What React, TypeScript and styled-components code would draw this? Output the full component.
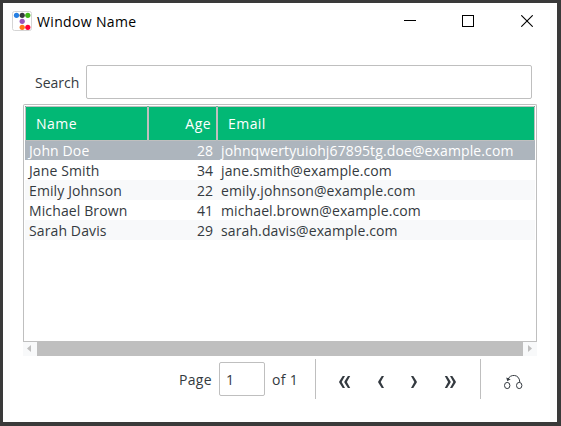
import React from 'react';
import styled, { createGlobalStyle } from 'styled-components';

const GlobalStyle = createGlobalStyle`
  * { box-sizing: border-box; }
  body { margin: 0; background: #3a3a3a; }
`;

const Frame = styled.div`
  width: 561px;
  height: 426px;
  padding: 3px 4px 4px 3px;
  background: #3a3a3a;
  font-family: 'Open Sans', 'Noto Sans', sans-serif;
  font-size: 14px;
  line-height: 20px;
  color: #343a40;
  overflow: hidden;
  white-space: nowrap;
`;

const Window = styled.main`
  height: 419px;
  background: #fff;
  display: flex;
  flex-direction: column;
`;

const TitleBar = styled.header`
  height: 62px;
  padding: 8px 24px 0 9px;
  display: flex;
  align-items: flex-start;
`;

const Title = styled.h1`
  margin: 0 auto 0 5px;
  font-size: 14px;
  font-weight: 400;
  line-height: 21px;
  letter-spacing: 0.35px;
  color: #000;
`;

const WindowButtons = styled.div`
  display: flex;
  gap: 46px;
  padding-top: 4px;
  svg { display: block; }
  svg:last-child { margin-left: 1px; }
`;

const Label = styled.span`
  flex: none;
`;

const SearchRow = styled.label`
  height: 34px;
  padding: 0 25px 0 32px;
  display: flex;
  align-items: center;
  ${Label} { width: 51px; padding-top: 1px; }
`;

const Field = styled.input`
  flex: none;
  width: 446px;
  height: 34px;
  padding: 0 6px;
  border: 1px solid #bfbfbf;
  border-radius: 2px;
  background: #fff;
  color: #343a40;
  font: inherit;
  outline: none;
`;

const PageField = styled(Field)`
  width: 46px;
`;

const TableBox = styled.section`
  width: 514px;
  height: 237px;
  margin: 5px 0 0 20px;
  padding: 1px 1px 0;
  border: 1px solid #bfbfbf;
  border-bottom: 0;
  border-radius: 2px 2px 0 0;
`;

const columns = '123px 69px 318px';

const HeaderRow = styled.div`
  display: grid;
  grid-template-columns: ${columns};
  height: 34px;
  background: #02b875;
`;

const HeaderCell = styled.div<{ $right?: boolean }>`
  border: 1px solid #bfbfbf;
  border-radius: 1px;
  padding: 1px ${p => (p.$right ? 5 : 10)}px 0;
  line-height: 32px;
  letter-spacing: 0.45px;
  color: #fff;
  text-align: ${p => (p.$right ? 'right' : 'left')};
`;

const Row = styled.div<{ $selected: boolean; $striped: boolean }>`
  display: grid;
  grid-template-columns: ${columns};
  height: 20px;
  color: ${p => (p.$selected ? '#fff' : '#343a40')};
  background: ${p => (p.$selected ? '#adb5bd' : p.$striped ? '#f8f9fa' : '#fff')};
`;

const Cell = styled.div<{ $right?: boolean }>`
  padding: 1px 4px 0;
  text-align: ${p => (p.$right ? 'right' : 'left')};
  letter-spacing: ${p => (p.$right ? 0 : 0.115)}px;
`;

const Scrollbar = styled.div`
  width: 514px;
  height: 15px;
  margin-left: 20px;
  display: grid;
  grid-template-columns: 14px 486px 14px;
  background: #bfbfbf;
`;

const ScrollArrow = styled.div`
  margin-top: 1px;
  background: #f8f9fa;
  svg { display: block; }
`;

const Footer = styled.footer`
  height: 40px;
  margin-top: 3px;
  padding-left: 176px;
  display: flex;
  align-items: center;
`;

const PageLabel = styled(Label)`
  width: 40px;
  padding-top: 1px;
  letter-spacing: 0.3px;
`;

const Total = styled(Label)`
  width: 43px;
  margin-left: 7px;
  padding-top: 1px;
  letter-spacing: 0.3px;
`;

const Divider = styled.div`
  flex: none;
  width: 1px;
  height: 40px;
  background: #bfbfbf;
`;

const Nav = styled.nav`
  flex: none;
  padding: 5px 0 0 22px;
  display: flex;
`;

const PageNav = styled(Nav)`
  width: 164px;
`;

const IconButton = styled.button<{ $width: number }>`
  width: ${p => p.$width}px;
  height: 16px;
  padding: 0;
  border: 0;
  background: none;
  color: #343a40;
  svg { display: block; }
`;

const people = [
  { name: 'John Doe', age: 28, email: 'johnqwertyuiohj67895tg.doe@example.com' },
  { name: 'Jane Smith', age: 34, email: 'jane.smith@example.com' },
  { name: 'Emily Johnson', age: 22, email: 'emily.johnson@example.com' },
  { name: 'Michael Brown', age: 41, email: 'michael.brown@example.com' },
  { name: 'Sarah Davis', age: 29, email: 'sarah.davis@example.com' },
];

const AppIcon = () => (
  <svg width="20" height="20" viewBox="0 0 20 20">
    <rect x=".5" y=".5" width="19" height="19" rx="2" fill="#fff" stroke="#d5d5d5" />
    <circle cx="4.5" cy="4.3" r="2.6" fill="#2780e3" />
    <circle cx="10.2" cy="4.3" r="2.6" fill="#373a3c" />
    <circle cx="15.8" cy="4.3" r="2.6" fill="#3fb618" />
    <circle cx="10.2" cy="10.3" r="2.6" fill="#9954bb" />
    <circle cx="10.2" cy="16.3" r="2.6" fill="#ff7518" />
    <circle cx="15.8" cy="16.3" r="2.6" fill="#ff0039" />
  </svg>
);

const Chevrons = ({ forward, double }: { forward?: boolean; double?: boolean }) => (
  <svg width="14" height="14" viewBox="0 0 14 14" fill="currentColor">
    <g transform={forward ? 'translate(14 0) scale(-1 1)' : undefined}>
      <path d="M4.7 1H7L3.7 7L7 13H4.7L1.2 7.5V6.5Z" />
      {double && <path d="M9.9 1H12.2L8.9 7L12.2 13H9.9L6.4 7.5V6.5Z" />}
    </g>
  </svg>
);

const ResetIcon = () => (
  <svg width="20" height="16" viewBox="0 0 20 16" fill="none" stroke="currentColor">
    <ellipse cx="4.2" cy="11.5" rx="2.7" ry="3.1" />
    <ellipse cx="16.2" cy="11.5" rx="2.7" ry="3.1" />
    <path d="M5.2 5C6.7 .3 16.4-.7 16.8 8" />
    <path d="M3.2 3.6L4.3 7.2L7.7 5.2Z" fill="currentColor" stroke="none" />
  </svg>
);

export default function App() {
  return (
    <>
      <GlobalStyle />
      <Frame>
        <Window>
          <TitleBar>
            <AppIcon />
            <Title>Window Name</Title>
            <WindowButtons>
              <svg width="12" height="12"><path d="M0 5.5H12" stroke="#000" /></svg>
              <svg width="12" height="12"><rect x=".5" y=".5" width="11" height="11" fill="none" stroke="#000" /></svg>
              <svg width="12" height="12"><path d="M.3 .3L11.7 11.7M11.7 .3L.3 11.7" stroke="#000" strokeWidth="1.1" /></svg>
            </WindowButtons>
          </TitleBar>
          <SearchRow>
            <Label>Search</Label>
            <Field />
          </SearchRow>
          <TableBox>
            <HeaderRow>
              <HeaderCell>Name</HeaderCell>
              <HeaderCell $right>Age</HeaderCell>
              <HeaderCell>Email</HeaderCell>
            </HeaderRow>
            {people.map((p, i) => (
              <Row key={p.email} $selected={i === 0} $striped={i % 2 === 0}>
                <Cell>{p.name}</Cell>
                <Cell $right>{p.age}</Cell>
                <Cell>{p.email}</Cell>
              </Row>
            ))}
          </TableBox>
          <Scrollbar>
            <ScrollArrow><svg width="14" height="14"><path d="M4 6.5L8 3V10Z" fill="#bfbfbf" /></svg></ScrollArrow>
            <div />
            <ScrollArrow><svg width="14" height="14"><path d="M9 6.5L5 3V10Z" fill="#bfbfbf" /></svg></ScrollArrow>
          </Scrollbar>
          <Footer>
            <PageLabel>Page</PageLabel>
            <PageField defaultValue="1" />
            <Total>of 1</Total>
            <Divider />
            <PageNav>
              <IconButton $width={39} aria-label="First page"><Chevrons double /></IconButton>
              <IconButton $width={27} aria-label="Previous page"><Chevrons /></IconButton>
              <IconButton $width={39} aria-label="Next page"><Chevrons forward /></IconButton>
              <IconButton $width={20} aria-label="Last page"><Chevrons forward double /></IconButton>
            </PageNav>
            <Divider />
            <Nav>
              <IconButton $width={20} aria-label="Reset table"><ResetIcon /></IconButton>
            </Nav>
          </Footer>
        </Window>
      </Frame>
    </>
  );
}
